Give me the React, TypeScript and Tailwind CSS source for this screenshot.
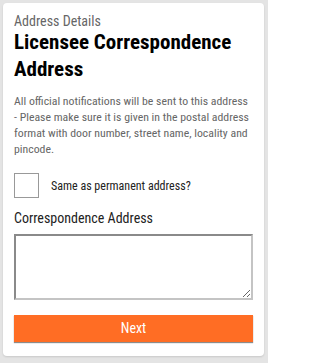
import React from "react";

export default function App() {
  return (
    <div
      className="min-h-[363px] w-[268px] bg-[#e4e4e4] pt-[3px] pl-[3px] font-stretch-condensed"
      style={{ fontFamily: "Roboto, 'Liberation Sans', sans-serif" }}
    >
      <div className="w-[261px] rounded-[4px] bg-white px-[11px] pt-[11px] pb-[14px] shadow-[0_1px_2px_rgba(0,0,0,0.12)]">
        <div className="text-[14px] leading-[15px] text-[#666]">Address Details</div>
        <h1 className="text-[21px] leading-[27px] font-bold text-black">
          Licensee Correspondence Address
        </h1>
        <p className="mt-[10px] text-[11.8px] leading-[16px] text-[#666]">
          All official notifications will be sent to this address - Please make sure it is given in the postal address format with door number, street name, locality and pincode.
        </p>
        <label className="mt-[16px] flex items-center">
          <span className="h-[25px] w-[25px] border border-[#999] bg-white"></span>
          <span className="ml-[12px] text-[12px] text-[#222]">Same as permanent address?</span>
        </label>
        <div className="mt-[10px] text-[14px] leading-[20px] text-[#222]">Correspondence Address</div>
        <textarea className="mt-[6px] block h-[66px] w-[239px] border-2 border-t-[#8a8a8a] border-l-[#8a8a8a] border-r-[#c4c4c4] border-b-[#c4c4c4] bg-white"></textarea>
        <button className="mt-[15px] block h-[27px] w-[239px] bg-[#ff6d24] text-[14px] text-white shadow-[0_1px_1px_rgba(0,0,0,0.45)]">
          Next
        </button>
      </div>
    </div>
  );
}
